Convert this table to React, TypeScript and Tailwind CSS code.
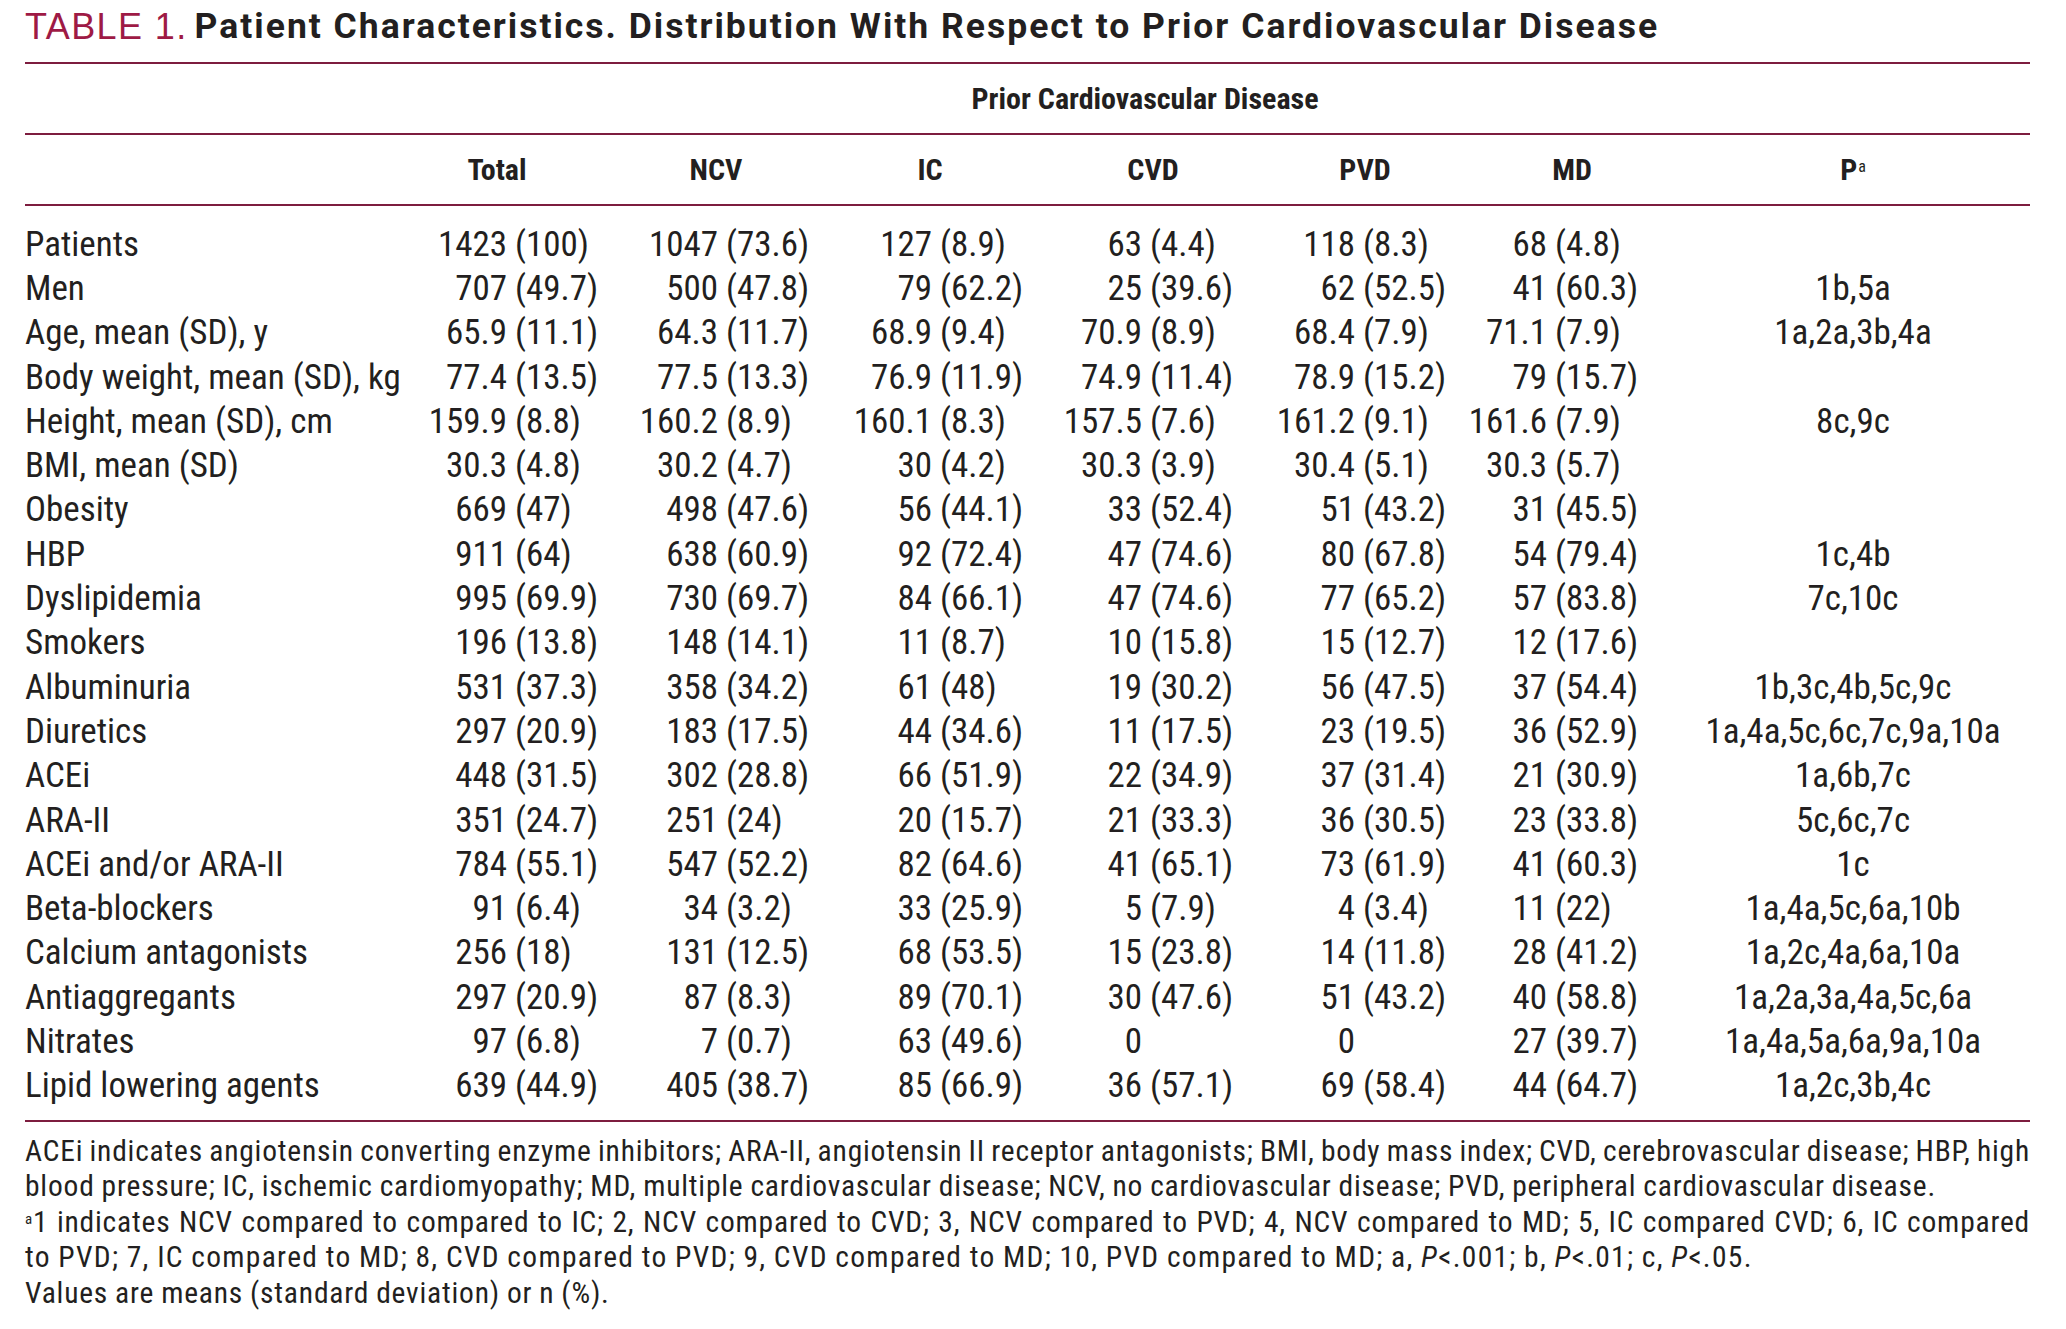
import React from 'react';

// condensed face: Roboto's width axis stands in for Helvetica Condensed
const COND = "font-['Roboto',sans-serif] [font-stretch:75%]";

type Row = [string, string, string, string, string, string, string, string];

const rows: Row[] = [
  ['Patients', '1423 (100)', '1047 (73.6)', '127 (8.9)', '63 (4.4)', '118 (8.3)', '68 (4.8)', ''],
  ['Men', '707 (49.7)', '500 (47.8)', '79 (62.2)', '25 (39.6)', '62 (52.5)', '41 (60.3)', '1b,5a'],
  ['Age, mean (SD), y', '65.9 (11.1)', '64.3 (11.7)', '68.9 (9.4)', '70.9 (8.9)', '68.4 (7.9)', '71.1 (7.9)', '1a,2a,3b,4a'],
  ['Body weight, mean (SD), kg', '77.4 (13.5)', '77.5 (13.3)', '76.9 (11.9)', '74.9 (11.4)', '78.9 (15.2)', '79 (15.7)', ''],
  ['Height, mean (SD), cm', '159.9 (8.8)', '160.2 (8.9)', '160.1 (8.3)', '157.5 (7.6)', '161.2 (9.1)', '161.6 (7.9)', '8c,9c'],
  ['BMI, mean (SD)', '30.3 (4.8)', '30.2 (4.7)', '30 (4.2)', '30.3 (3.9)', '30.4 (5.1)', '30.3 (5.7)', ''],
  ['Obesity', '669 (47)', '498 (47.6)', '56 (44.1)', '33 (52.4)', '51 (43.2)', '31 (45.5)', ''],
  ['HBP', '911 (64)', '638 (60.9)', '92 (72.4)', '47 (74.6)', '80 (67.8)', '54 (79.4)', '1c,4b'],
  ['Dyslipidemia', '995 (69.9)', '730 (69.7)', '84 (66.1)', '47 (74.6)', '77 (65.2)', '57 (83.8)', '7c,10c'],
  ['Smokers', '196 (13.8)', '148 (14.1)', '11 (8.7)', '10 (15.8)', '15 (12.7)', '12 (17.6)', ''],
  ['Albuminuria', '531 (37.3)', '358 (34.2)', '61 (48)', '19 (30.2)', '56 (47.5)', '37 (54.4)', '1b,3c,4b,5c,9c'],
  ['Diuretics', '297 (20.9)', '183 (17.5)', '44 (34.6)', '11 (17.5)', '23 (19.5)', '36 (52.9)', '1a,4a,5c,6c,7c,9a,10a'],
  ['ACEi', '448 (31.5)', '302 (28.8)', '66 (51.9)', '22 (34.9)', '37 (31.4)', '21 (30.9)', '1a,6b,7c'],
  ['ARA-II', '351 (24.7)', '251 (24)', '20 (15.7)', '21 (33.3)', '36 (30.5)', '23 (33.8)', '5c,6c,7c'],
  ['ACEi and/or ARA-II', '784 (55.1)', '547 (52.2)', '82 (64.6)', '41 (65.1)', '73 (61.9)', '41 (60.3)', '1c'],
  ['Beta-blockers', '91 (6.4)', '34 (3.2)', '33 (25.9)', '5 (7.9)', '4 (3.4)', '11 (22)', '1a,4a,5c,6a,10b'],
  ['Calcium antagonists', '256 (18)', '131 (12.5)', '68 (53.5)', '15 (23.8)', '14 (11.8)', '28 (41.2)', '1a,2c,4a,6a,10a'],
  ['Antiaggregants', '297 (20.9)', '87 (8.3)', '89 (70.1)', '30 (47.6)', '51 (43.2)', '40 (58.8)', '1a,2a,3a,4a,5c,6a'],
  ['Nitrates', '97 (6.8)', '7 (0.7)', '63 (49.6)', '0', '0', '27 (39.7)', '1a,4a,5a,6a,9a,10a'],
  ['Lipid lowering agents', '639 (44.9)', '405 (38.7)', '85 (66.9)', '36 (57.1)', '69 (58.4)', '44 (64.7)', '1a,2c,3b,4c'],
];

// width of the number part, so each column lines up on the space before "("
const splitWidths = ['w-[119px]', 'w-[112px]', 'w-[106px]', 'w-[108px]', 'w-[83px]', 'w-[89px]'];

const GRID = 'grid grid-cols-[363px_218px_220px_208px_238px_186px_228px_334px]';

function Rule() {
  return <div className="h-[2px] w-full bg-[#7d1d3f]" />;
}

function ValueCell({ value, split }: { value: string; split: string }) {
  const i = value.indexOf(' (');
  const num = i === -1 ? value : value.slice(0, i);
  const rest = i === -1 ? '' : value.slice(i + 1);
  return (
    <div className="flex items-center whitespace-nowrap">
      <span className={`${split} shrink-0 text-right`}>{num}</span>
      {rest && <span className="pl-[8px]">{rest}</span>}
    </div>
  );
}

export default function App() {
  return (
    <div className="min-h-screen bg-white text-[#231f20]">
      <div className="box-content w-[2005px] pl-[25px]">
        <div className="flex h-[53px] items-center whitespace-nowrap leading-none">
          <span className="font-['Liberation_Sans',sans-serif] text-[36px] tracking-[1.4px] text-[#9e1a45]">TABLE 1.</span>
          <span className="ml-[7px] font-['Roboto',sans-serif] text-[35.5px] font-bold tracking-[2px]">
            Patient Characteristics. Distribution With Respect to Prior Cardiovascular Disease
          </span>
        </div>
        <div className="mt-[9px]">
          <Rule />
        </div>

        <div className={`${COND} flex h-[69px] items-center text-[30px] font-bold`}>
          <div className="w-[363px]" />
          <div className="w-[1514px] text-center">Prior Cardiovascular Disease</div>
        </div>
        <Rule />

        <div className={`${COND} ${GRID} h-[69px] items-center text-[30px] font-bold`}>
          <div />
          {['Total', 'NCV', 'IC', 'CVD', 'PVD', 'MD'].map((h) => (
            <div key={h} className="text-center">
              {h}
            </div>
          ))}
          <div className="text-center">
            P<sup className="ml-[1px] text-[16px] font-normal">a</sup>
          </div>
        </div>
        <Rule />

        <div className={`${COND} pt-[16px] pb-[12px] text-[35px]`}>
          {rows.map((r) => (
            <div key={r[0]} className={`${GRID} h-[44.3px] items-center leading-none`}>
              <div className="whitespace-nowrap">{r[0]}</div>
              {r.slice(1, 7).map((v, idx) => (
                <ValueCell key={idx} value={v} split={splitWidths[idx]} />
              ))}
              <div className="whitespace-nowrap text-center">{r[7]}</div>
            </div>
          ))}
        </div>
        <Rule />

        <div className={`${COND} pt-[12px] text-[29.5px] leading-[35.5px] tracking-[0.8px] [word-spacing:-0.6px]`}>
          <p className="whitespace-nowrap [text-align-last:justify] [word-spacing:-1.4px]">
            ACEi indicates angiotensin converting enzyme inhibitors; ARA-II, angiotensin II receptor antagonists; BMI, body mass index; CVD, cerebrovascular disease; HBP, high
          </p>
          <p className="whitespace-nowrap">
            blood pressure; IC, ischemic cardiomyopathy; MD, multiple cardiovascular disease; NCV, no cardiovascular disease; PVD, peripheral cardiovascular disease.
          </p>
          <p className="whitespace-nowrap [text-align-last:justify]">
            <sup className="text-[15px]">a</sup>1 indicates NCV compared to compared to IC; 2, NCV compared to CVD; 3, NCV compared to PVD; 4, NCV compared to MD; 5, IC compared CVD; 6, IC compared
          </p>
          <p className="whitespace-nowrap tracking-[1.3px]">
            to PVD; 7, IC compared to MD; 8, CVD compared to PVD; 9, CVD compared to MD; 10, PVD compared to MD; a, <i>P</i>&lt;.001; b, <i>P</i>&lt;.01; c, <i>P</i>&lt;.05.
          </p>
          <p className="whitespace-nowrap">Values are means (standard deviation) or n (%).</p>
        </div>
      </div>
    </div>
  );
}
